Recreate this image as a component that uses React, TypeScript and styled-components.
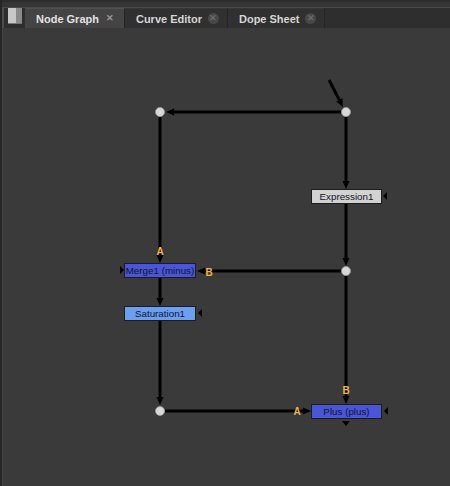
import { FC } from "react";
import styled, { createGlobalStyle } from "styled-components";

const GlobalStyle = createGlobalStyle`
  html, body { margin: 0; padding: 0; background: #3a3a3a; }
  #root { width: 450px; height: 486px; }
`;

// #region styled
const Window = styled.div`
  width: 450px;
  height: 486px;
  display: flex;
  flex-direction: column;
  background: #3a3a3a;
  border-left: 2px solid #262626;
  box-sizing: border-box;
  overflow: hidden;
  font-family: "DejaVu Sans", "Liberation Sans", sans-serif;
`;

const TopStrip = styled.div`
  height: 8px;
  background: #353535;
  border-top: 2px solid #2c2c2c;
  border-bottom: 1px solid #4a4a4a;
  box-sizing: border-box;
`;

const TabBar = styled.div`
  height: 20px;
  display: flex;
  align-items: flex-end;
  background: #2e2e2e;
  border-left: 2px solid #4c4c4c;
  padding-left: 4px;
`;

const PanelIcon = styled.div`
  width: 14px;
  height: 15px;
  margin-right: 3px;
  align-self: flex-start;
  background: linear-gradient(to right, #c8c8c8 0 55%, #8a8a8a 55% 100%);
  border-bottom: 1px solid #777;
`;

const Tab = styled.div<{ active?: boolean }>`
  height: 20px;
  display: flex;
  align-items: center;
  gap: 6px;
  padding: 0 8px 0 11px;
  box-sizing: border-box;
  background: ${p => (p.active ? "#444444" : "#303030")};
  border-right: 1px solid #252525;
  border-top: 1px solid ${p => (p.active ? "#505050" : "#363636")};
  color: ${p => (p.active ? "#e2e2e2" : "#d6d6d6")};
  font-family: "Liberation Sans", Arial, sans-serif;
  font-size: 11px;
  font-weight: bold;
  white-space: nowrap;
`;

const Close = styled.span<{ active?: boolean }>`
  width: 11px;
  height: 11px;
  border-radius: 50%;
  background: ${p => (p.active ? "transparent" : "#484848")};
  color: ${p => (p.active ? "#9a9a9a" : "#6a6a6a")};
  font-size: 9px;
  line-height: 11px;
  text-align: center;
  font-weight: bold;
`;

const Canvas = styled.div`
  position: relative;
  flex: 1;
  background: #3a3a3a;
  border-left: 1px solid #444;
`;

const Edges = styled.svg`
  position: absolute;
  left: 0;
  top: 0;
`;

const Node = styled.div<{ fill: string }>`
  position: absolute;
  height: 15px;
  box-sizing: border-box;
  background: ${p => p.fill};
  border: 1px solid #1c1c1c;
  display: flex;
  align-items: center;
  justify-content: center;
  color: #14142a;
  font-family: "Liberation Sans", Arial, sans-serif;
  font-size: 9.8px;
  white-space: nowrap;
`;

const Label = styled.span`
  position: absolute;
  color: #f2b63c;
  font-family: "Liberation Sans", Arial, sans-serif;
  font-size: 10px;
  font-weight: bold;
  line-height: 10px;
  transform: translate(-50%, -50%);
`;
// #endregion

// canvas origin in page coordinates
const OX = 3;
const OY = 28;

interface INodeBox {
  name: string;
  x: number;
  y: number;
  w: number;
  fill: string;
}

const nodes: INodeBox[] = [
  { name: "Expression1", x: 311, y: 189, w: 71, fill: "#d2d2d2" },
  { name: "Merge1 (minus)", x: 124, y: 263, w: 72, fill: "#4a55d8" },
  { name: "Saturation1", x: 124, y: 306, w: 72, fill: "#6a9ff2" },
  { name: "Plus (plus)", x: 311, y: 404, w: 71, fill: "#4a55d8" },
];

const labels = [
  { t: "A", x: 160, y: 252 },
  { t: "B", x: 209, y: 273 },
  { t: "A", x: 297, y: 412 },
  { t: "B", x: 346, y: 391 },
];

const dots: [number, number][] = [
  [160, 112],
  [346, 112],
  [346, 271],
  [160, 411],
];

// line ending in an arrowhead at (x2, y2)
const Arrow: FC<{ x1: number; y1: number; x2: number; y2: number }> = ({ x1, y1, x2, y2 }) => {
  const a = Math.atan2(y2 - y1, x2 - x1);
  const len = 8;
  const half = 3.5;
  const bx = x2 - Math.cos(a) * len;
  const by = y2 - Math.sin(a) * len;
  const px = -Math.sin(a) * half;
  const py = Math.cos(a) * half;
  return (
    <g>
      <line x1={x1 - OX} y1={y1 - OY} x2={bx + Math.cos(a) * 2 - OX} y2={by + Math.sin(a) * 2 - OY} stroke="#000" strokeWidth={3} />
      <polygon points={`${x2 - OX},${y2 - OY} ${bx + px - OX},${by + py - OY} ${bx - px - OX},${by - py - OY}`} fill="#000" />
    </g>
  );
};

const Tri: FC<{ x: number; y: number; dir: "left" | "right" | "down" }> = ({ x, y, dir }) => {
  const X = x - OX;
  const Y = y - OY;
  const pts =
    dir === "left"
      ? `${X},${Y} ${X + 4},${Y - 4} ${X + 4},${Y + 4}`
      : dir === "right"
      ? `${X},${Y} ${X - 4},${Y - 4} ${X - 4},${Y + 4}`
      : `${X},${Y} ${X - 4},${Y - 5} ${X + 4},${Y - 5}`;
  return <polygon points={pts} fill="#000" />;
};

const Graph: FC = () => (
  <Canvas>
    <Edges width={450} height={460}>
      <Arrow x1={329} y1={80} x2={343} y2={107} />
      <Arrow x1={341} y1={112} x2={166} y2={112} />
      <Arrow x1={160} y1={117} x2={160} y2={263} />
      <Arrow x1={346} y1={117} x2={346} y2={189} />
      <Arrow x1={346} y1={204} x2={346} y2={266} />
      <Arrow x1={341} y1={271} x2={197} y2={271} />
      <Arrow x1={160} y1={278} x2={160} y2={306} />
      <Arrow x1={160} y1={321} x2={160} y2={405} />
      <Arrow x1={165} y1={411} x2={311} y2={411} />
      <Arrow x1={346} y1={276} x2={346} y2={404} />
      <Tri x={346} y={426} dir="down" />
      <Tri x={383} y={196} dir="left" />
      <Tri x={124} y={270} dir="right" />
      <Tri x={198} y={313} dir="left" />
      <Tri x={384} y={411} dir="left" />
      {dots.map(([x, y], i) => (
        <circle key={i} cx={x - OX} cy={y - OY} r={4.5} fill="#d8d8d8" stroke="#9a9a9a" strokeWidth={0.8} />
      ))}
    </Edges>
    {nodes.map(n => (
      <Node key={n.name} fill={n.fill} style={{ left: n.x - OX, top: n.y - OY, width: n.w }}>
        {n.name}
      </Node>
    ))}
    {labels.map((l, i) => (
      <Label key={i} style={{ left: l.x - OX, top: l.y - OY }}>
        {l.t}
      </Label>
    ))}
  </Canvas>
);

const App: FC = () => (
  <>
    <GlobalStyle />
    <Window>
      <TopStrip />
      <TabBar>
        <PanelIcon />
        <Tab active>
          Node Graph <Close active>✕</Close>
        </Tab>
        <Tab>
          Curve Editor <Close>✕</Close>
        </Tab>
        <Tab>
          Dope Sheet <Close>✕</Close>
        </Tab>
      </TabBar>
      <Graph />
    </Window>
  </>
);

export default App;
